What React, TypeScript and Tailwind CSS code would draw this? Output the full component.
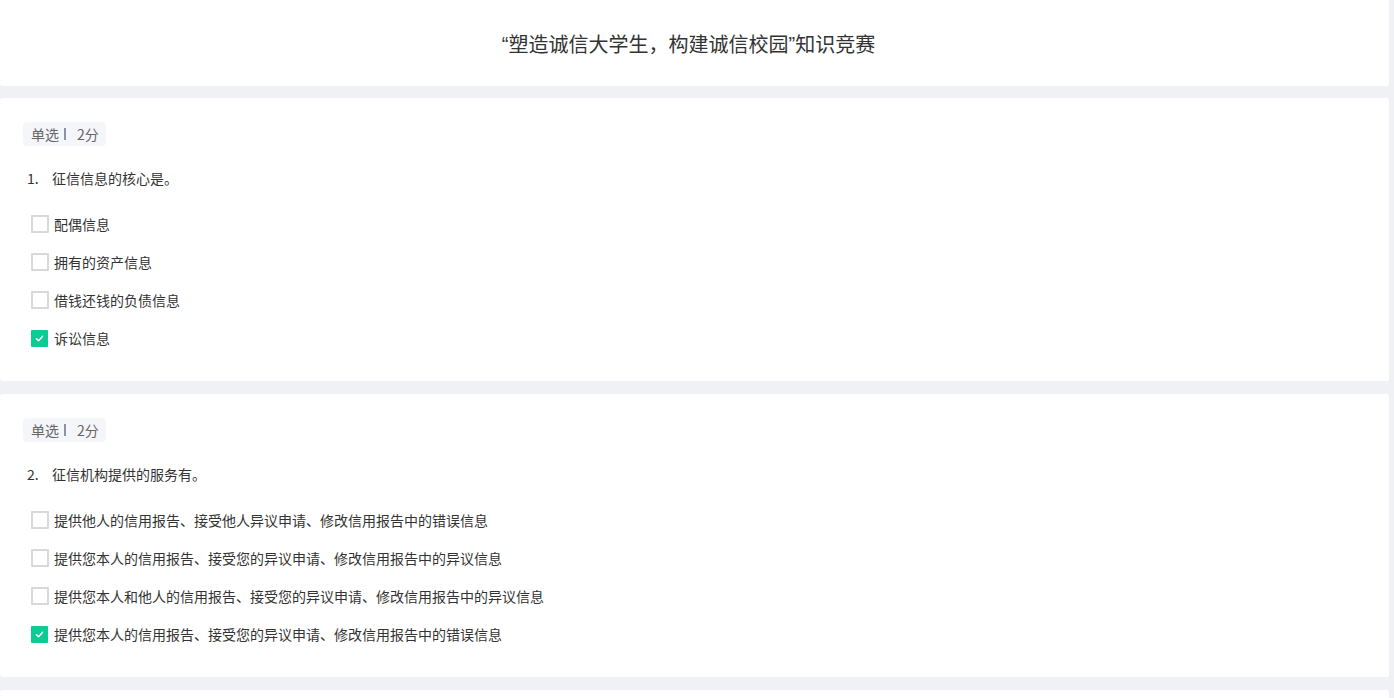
import React from "react";

type Question = {
  no: number;
  title: string;
  options: string[];
  answer: number;
};

const questions: Question[] = [
  {
    no: 1,
    title: "征信信息的核心是。",
    options: ["配偶信息", "拥有的资产信息", "借钱还钱的负债信息", "诉讼信息"],
    answer: 3,
  },
  {
    no: 2,
    title: "征信机构提供的服务有。",
    options: [
      "提供他人的信用报告、接受他人异议申请、修改信用报告中的错误信息",
      "提供您本人的信用报告、接受您的异议申请、修改信用报告中的异议信息",
      "提供您本人和他人的信用报告、接受您的异议申请、修改信用报告中的异议信息",
      "提供您本人的信用报告、接受您的异议申请、修改信用报告中的错误信息",
    ],
    answer: 3,
  },
];

function Checkbox({ checked }: { checked: boolean }) {
  if (checked) {
    return (
      <span className="flex h-[17px] w-[17px] items-center justify-center rounded-[1px] bg-[#0ccb93]">
        <svg width="11" height="11" viewBox="0 0 12 12" fill="none">
          <path d="M2.6 6.2 L5 8.5 L9.4 3.6" stroke="#fff" strokeWidth="1.6" strokeLinecap="round" strokeLinejoin="round" />
        </svg>
      </span>
    );
  }
  return <span className="block h-[18px] w-[18px] rounded-[1px] border-2 border-[#d9d9d9] bg-white" />;
}

function QuestionCard({ q }: { q: Question }) {
  return (
    <div className="h-[283px] rounded-[3px] bg-white px-[23px] pt-6">
      {/* type + score badge */}
      <div className="flex">
        <div className="flex h-6 items-center rounded-[4px] bg-[#f5f6fa] pl-2 pr-[7px] text-[14px] leading-none text-[#666]">
          <span>单选</span>
          <span className="ml-[5px] mr-[11px] inline-block h-[12px] w-[2px] bg-[#8a94a8]" />
          <span>2分</span>
        </div>
      </div>

      <div className="mt-[22px] flex h-5 items-center pl-1 text-[14px] leading-5 text-[#333]">
        <span className="w-[25px] text-[14px] text-[#333]">{q.no}.</span>
        <span>{q.title}</span>
      </div>

      <div className="mt-[17px]">
        {q.options.map((opt, i) => (
          <div key={i} className="flex h-[38px] items-center pl-2">
            <Checkbox checked={i === q.answer} />
            <span className={`text-[14px] leading-5 text-[#333] ${i === q.answer ? "ml-[6px]" : "ml-[5px]"}`}>{opt}</span>
          </div>
        ))}
      </div>
    </div>
  );
}

export default function App() {
  return (
    <div
      className="min-h-screen bg-[#f0f1f5] pr-[5px]"
      style={{ fontFamily: '"Microsoft YaHei", "Noto Sans CJK SC", "Noto Sans", sans-serif' }}
    >
      <div className="flex h-[86px] items-center justify-center rounded-b-[3px] bg-white pr-3 pt-[2px] text-[20px] leading-7 text-[#333]">
        <span style={{ fontFamily: '"Liberation Sans", sans-serif' }}>“</span>
        <span>塑造诚信大学生，构建诚信校园</span>
        <span style={{ fontFamily: '"Liberation Sans", sans-serif' }}>”</span>
        <span>知识竞赛</span>
      </div>

      <div className="mt-3 flex flex-col gap-[13px]">
        {questions.map((q) => (
          <QuestionCard key={q.no} q={q} />
        ))}
        <div className="h-[200px] rounded-t-[3px] bg-white" />
      </div>
    </div>
  );
}
